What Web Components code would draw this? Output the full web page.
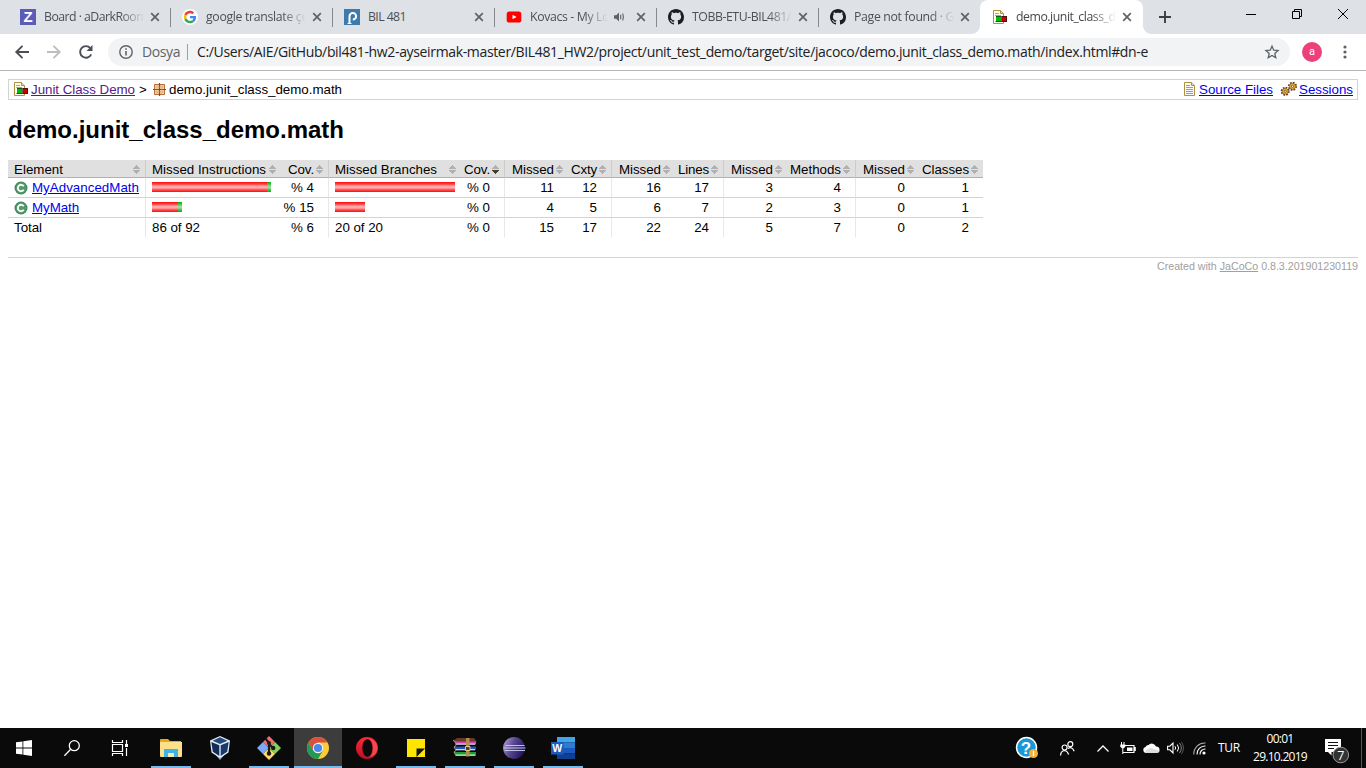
<!DOCTYPE html>
<html lang="tr">
<head>
<meta charset="utf-8">
<title>demo.junit_class_demo.math</title>
<style>
html,body{margin:0;height:100%;overflow:hidden;background:#fff}
</style>
</head>
<body>
<desktop-screen></desktop-screen>
<script>
const UI = '"Open Sans","Noto Sans",sans-serif';
const DOC = '"Liberation Sans",Arial,sans-serif';

function define(name, render) {
  customElements.define(name, class extends HTMLElement {
    constructor() { super(); this.attachShadow({ mode: 'open' }); }
    connectedCallback() { if (!this.shadowRoot.firstChild) this.shadowRoot.innerHTML = render(this); }
  });
}

/* name: [width, height, markup] */
const report = `<path d="M.5.5h7l3 3v10H.5z" fill="#fffdf0" stroke="#b0903c"/><path d="M7.500.5v3h3" fill="#e8dcb0" stroke="#b0903c"/><path d="M2 3.500h4M2 5.500h6M2 11.500h7" stroke="#8ba6d0"/><path d="M3 6h5.500v6H3z" fill="#0a5a1a"/><path d="M3 7h5v4H3z" fill="#0b0"/><path d="M8.500 6H14v6H8.500z" fill="#501010"/><path d="M9 7h4v4H9z" fill="#c00"/>`;
const github = `<path fill="#1b1f23" fill-rule="evenodd" d="M8 0C3.58 0 0 3.58 0 8c0 3.54 2.29 6.53 5.47 7.59.4.07.55-.17.55-.38 0-.19-.01-.82-.01-1.49-2.01.37-2.53-.49-2.69-.94-.09-.23-.48-.94-.82-1.13-.28-.15-.68-.52-.01-.53.63-.01 1.08.58 1.23.82.72 1.21 1.87.87 2.33.66.07-.52.28-.87.51-1.07-1.78-.2-3.64-.89-3.64-3.95 0-.87.31-1.59.82-2.15-.08-.2-.36-1.02.08-2.12 0 0 .67-.21 2.2.82.64-.18 1.32-.27 2-.27.68 0 1.36.09 2 .27 1.53-1.04 2.2-.82 2.2-.82.44 1.1.16 1.92.08 2.12.51.56.82 1.27.82 2.15 0 3.07-1.87 3.75-3.65 3.95.29.25.54.73.54 1.48 0 1.07-.01 1.93-.01 2.2 0 .21.15.46.55.38A8.013 8.013 0 0016 8c0-4.42-3.58-8-8-8z"/>`;
const gear = (x, y) => `<g transform="translate(${x} ${y})"><circle r="3.700" fill="none" stroke="#5c3a10" stroke-width="1.600" stroke-dasharray="1.700 1.200"/><circle r="3" fill="#f0b440" stroke="#7a4c14" stroke-width=".7"/><circle r="1.100" fill="#fff" stroke="#6a4010" stroke-width=".8"/></g>`;
const ICONS = {
  zube: [16,16,`<path fill="#5b5bb8" d="M0 0h16v16H0z"/><text x="8" y="13.300" text-anchor="middle" font-family="Liberation Sans" font-weight="700" font-size="15" fill="#fff">Z</text>`],
  google: [16,16,`<circle cx="8" cy="8" r="8" fill="#fff"/><g transform="translate(1.700 1.700) scale(.2625)"><path fill="#EA4335" d="M24 9.500c3.540 0 6.710 1.220 9.210 3.600l6.850-6.850C35.900 2.380 30.470 0 24 0 14.620 0 6.510 5.380 2.560 13.220l7.980 6.190C12.430 13.720 17.740 9.500 24 9.500z"/><path fill="#4285F4" d="M46.980 24.550c0-1.570-.15-3.090-.38-4.550H24v9.020h12.940c-.58 2.960-2.260 5.480-4.780 7.180l7.730 6c4.510-4.180 7.090-10.360 7.090-17.650z"/><path fill="#FBBC05" d="M10.530 28.590a14.500 14.500 0 010-9.180l-7.980-6.190a24 24 0 000 21.560l7.980-6.190z"/><path fill="#34A853" d="M24 48c6.480 0 11.930-2.130 15.890-5.810l-7.730-6c-2.150 1.450-4.920 2.300-8.160 2.300-6.260 0-11.570-4.220-13.470-9.910l-7.980 6.190C6.510 42.620 14.620 48 24 48z"/></g>`],
  piazza: [16,16,`<path fill="#3e7aab" d="M0 0h16v16H0z"/><path d="M5.500 14V7.200a3.300 3.300 0 1 1 3.300 3.400" fill="none" stroke="#fff" stroke-width="2"/><path d="M3.500 14.500h4" stroke="#fff"/>`],
  youtube: [16,16,`<rect x=".7" y="2.600" width="14.600" height="11" rx="2.600" fill="#f00"/><path fill="#fff" d="M6.500 5.700v4.600l4-2.300z"/>`],
  github: [16,16,github],
  report: [14,14,report],
  close: [10,10,`<path d="M1.200 1.200l7.600 7.600M8.800 1.200L1.200 8.800" stroke="#5f6368" stroke-width="1.700"/>`],
  sound: [11,10,`<path d="M0 3.200h2.200L5 .6v8.800L2.200 6.800H0z" fill="#5f6368"/><path d="M6.700 2.800v4.400M8.700 1.500q1.400 3.500 0 7" fill="none" stroke="#5f6368" stroke-width="1.100"/>`],
  plus: [12,12,`<path d="M6 0v12M0 6h12" stroke="#3c4043" stroke-width="1.900"/>`],
  min: [10,10,`<path d="M0 5.500h10" stroke="#000"/>`],
  restore: [10,10,`<path d="M.5 2.500h7v7h-7zM2.500 2.500v-2h7v7h-2" fill="none" stroke="#000"/>`],
  winclose: [10,10,`<path d="M0 0l10 10M10 0L0 10" stroke="#000"/>`],
  back: [14,14,`<path d="M14 7H1.500M7.500.8L1.300 7l6.200 6.200" fill="none" stroke="#4b4f54" stroke-width="1.900"/>`],
  forward: [14,14,`<path d="M0 7h12.500M6.500.8L12.700 7l-6.200 6.200" fill="none" stroke="#bcbec1" stroke-width="1.900"/>`],
  reload: [16,16,`<path d="M13.200 10.400a5.800 5.800 0 1 1-.9-6.300" fill="none" stroke="#4b4f54" stroke-width="1.900"/><path d="M14.500 1v6h-6z" fill="#4b4f54"/>`],
  info: [14,14,`<circle cx="7" cy="7" r="6.200" fill="none" stroke="#5f6368" stroke-width="1.400"/><path d="M7 6v4.500M7 3.300v1.500" stroke="#5f6368" stroke-width="1.600"/>`],
  star: [14,14,`<path d="M7 1.200l1.750 4 4.300.4-3.250 2.850.97 4.230L7 10.400l-3.770 2.280.97-4.230L.95 5.600l4.300-.4z" fill="none" stroke="#5f6368" stroke-width="1.300"/>`],
  menu: [4,14,`<g fill="#5f6368"><circle cx="2" cy="2" r="1.600"/><circle cx="2" cy="7" r="1.600"/><circle cx="2" cy="12" r="1.600"/></g>`],
  package: [13,13,`<path d="M1.500 1.500h10v10h-10z" fill="#f5d3a4" stroke="#b06a38"/><path d="M6.500 0v13M0 6.500h13" stroke="#8a4a20" stroke-width="1.200"/><path d="M4 1v11M9 1v11M1 4h11M1 9h11" stroke="#d79a62" stroke-width=".5"/>`],
  source: [11,14,`<path d="M.5.5h7l3 3v10H.5z" fill="#f8faff" stroke="#b0903c"/><path d="M7.500.5v3h3" fill="#e8dcb0" stroke="#b0903c"/><path d="M2 3.500h4M2 5.500h7M2 7.500h7M2 9.500h7M2 11.500h7" stroke="#7f9fd0"/>`],
  gears: [16,14,gear(4.200,9.300)+gear(11.500,4.300)],
  klass: [14,14,`<circle cx="7" cy="7" r="6.500" fill="#3c8a58"/><circle cx="7" cy="7" r="5.400" fill="#539a6b"/><path d="M9.700 5.200A3.200 3.200 0 1 0 9.700 8.800" fill="none" stroke="#fff" stroke-width="1.900"/>`],
  windows: [16,16,`<path fill="#fff" d="M0 2.300L6.500 1.400v6.100H0zM7.300 1.300L16 0v7.500H7.300zM0 8.400h6.500v6.200L0 13.700zM7.300 8.400H16V16l-8.700-1.300z"/>`],
  search: [16,16,`<circle cx="10.300" cy="5.700" r="5" fill="none" stroke="#fff" stroke-width="1.300"/><path d="M6.700 9.300L.4 15.700" stroke="#fff" stroke-width="1.300"/>`],
  taskview: [16,16,`<path d="M.5 0v3M.5 2.500h10M10.500 0v3M.5 4.500h10v7H.5zM.5 16v-2.500h10V16M14.500 0v4M14.500 8v8" fill="none" stroke="#fff" stroke-width="1.200"/><path fill="#fff" d="M13 4h3v3h-3z"/>`],
  explorer: [22,18,`<path fill="#e8a818" d="M0 1q0-1 1-1h7l2 2h11v4H0z"/><path fill="#ffe08a" d="M0 3h22v14q0 1-1 1H1q-1 0-1-1z"/><path fill="#3cb4e8" d="M4 10h14v8h-4v-4H8v4H4z"/><path fill="#ffe9a6" d="M8.500 14h5v4h-5z"/>`],
  vbox: [20,24,`<path fill="#8aa8cc" d="M4 17l6 7 6-7z"/><path fill="#e4eef8" d="M10 0l10 4.500-1.500 12L10 22l-8.500-5.500L0 4.500z"/><path fill="#24497c" d="M10 1.300l7.500 3.400-7.500 3.300-7.500-3.300z"/><path fill="#122c58" d="M1.300 6l8 3.300V20l-6.500-4.300z"/><path fill="#1b3a6c" d="M18.700 6l-8 3.300V20l6.500-4.300z"/>`],
  git: [24,24,`<path fill="#f07070" d="M12 0l6 6-6 6-6-6z"/><path fill="#7ca8f8" d="M6 6l6 6-6 6-6-6z"/><path fill="#84d05c" d="M18 6l6 6-6 6-6-6z"/><path fill="#f8dc6c" d="M12 12l6 6-6 6-6-6z"/><path d="M8.500 2.500l3.500 4.500v11M12 8l4 4" fill="none" stroke="#201818" stroke-width="2.200"/><g fill="#201818"><circle cx="12" cy="7" r="2"/><circle cx="12" cy="17.500" r="2.200"/><circle cx="16.200" cy="12" r="2.200"/></g>`],
  chrome: [22,22,`<circle cx="11" cy="11" r="11" fill="#fccb3a"/><path fill="#d9503f" d="M1.470 5.500A11 11 0 0 1 20.530 5.500H11L6.240 13.750z"/><path fill="#239957" d="M1.470 5.500A11 11 0 0 0 11 22l4.760-8.250H6.240z"/><circle cx="11" cy="11" r="5.200" fill="#f4f4f4"/><circle cx="11" cy="11" r="4.100" fill="#4a87ee"/>`],
  opera: [22,22,`<defs><linearGradient id="g" x2="0" y2="1"><stop stop-color="#ff2838"/><stop offset="1" stop-color="#b81022"/></linearGradient></defs><path fill="url(#g)" fill-rule="evenodd" d="M11 0a11 11 0 1 0 0 22 11 11 0 0 0 0-22zM11.500 2.300c3 0 4.900 3.700 4.900 8.700s-1.900 8.700-4.900 8.700-5.100-3.700-5.100-8.700 2.100-8.700 5.100-8.700z"/><path fill="#ff5a60" opacity=".7" d="M13 1.800c6 1 8.500 5 8.500 9.200s-2.500 8.200-8.500 9.200c2.800-1.500 4-5 4-9.200s-1.200-7.700-4-9.200z"/>`],
  sticky: [18,18,`<path fill="#ffe600" d="M0 0h18v18H0z"/><path fill="#141414" d="M9.500 9.500H18L9.500 18z"/>`],
  winrar: [24,20,`<path fill="#6a3a28" d="M0 3L4 0h17l3 4H2z"/><path fill="#c44cae" d="M1 3.500h22v3H3z"/><path fill="#e8d4e4" d="M3 5.500h19v1.200H3z"/><path fill="#2450c8" d="M1 8.500h22v3.200H3z"/><path fill="#d8dce8" d="M3 11h19v1.300H3z"/><path fill="#18a030" d="M1 14h22v4H3z"/><path fill="#d8e8d8" d="M3 16.500h19v1.200H3z"/><path d="M0 2l3 2.500v3L1 9l2 3.500L1 14l2 4" stroke="#a89880" fill="none"/><path fill="#b88a50" d="M13 0h3.500v18.500H13z"/><path d="M12.500 8.500h4.500v4h-4.500z" fill="#504030" stroke="#e8c880"/>`],
  eclipse: [22,22,`<defs><linearGradient id="e" x2="1" y2=".4"><stop stop-color="#b8aade"/><stop offset=".5" stop-color="#5a4a90"/><stop offset="1" stop-color="#241a62"/></linearGradient></defs><circle cx="11" cy="11" r="10.900" fill="url(#e)"/><path d="M2.500 8.500h19M.5 11h22M1.500 13.500h20.500" stroke="#d0d0f4" stroke-width=".9"/>`],
  word: [24,22,`<path fill="#41a5ee" d="M6 0h18v5.500H6z"/><path fill="#2b7cd3" d="M6 5.500h18V11H6z"/><path fill="#185abd" d="M6 11h18v5.500H6z"/><path fill="#103f91" d="M6 16.500h18V22H6z"/><path fill="#1a5dbe" d="M0 5h12.500v12.500H0z"/><text x="6.200" y="15" text-anchor="middle" font-family="Liberation Sans" font-weight="700" font-size="10.500" fill="#fff">W</text>`],
  help: [22,22,`<circle cx="10.500" cy="10.500" r="10" fill="#1898d8" stroke="#fff" stroke-width="1.500"/><text x="10" y="16.500" text-anchor="middle" font-family="Liberation Sans" font-weight="700" font-size="17" fill="#fff">?</text><circle cx="17.500" cy="16.500" r="4.500" fill="#f3b23c"/><path d="M17.500 14v5" stroke="#fff" stroke-width="1.300"/>`],
  people: [15,15,`<g fill="none" stroke="#fff" stroke-width="1.200"><circle cx="4.600" cy="6.500" r="2.500"/><path d="M.6 14.500q0-4.500 4-5 3 .5 4 4"/><circle cx="10.300" cy="3.200" r="2.500"/><path d="M8 7.500q4-2.500 6.200 2.800"/></g>`],
  chevron: [12,7,`<path d="M.5 6.500L6 1l5.500 5.500" fill="none" stroke="#fff" stroke-width="1.300"/>`],
  battery: [16,12,`<path d="M4.500 3.500h9.500v7H3M15.200 5v4" fill="none" stroke="#fff" stroke-width="1.200"/><path fill="#fff" d="M7 5.500h5.500v3.500H7z"/><path d="M1.500 0v3M4 0v3M2.800 5v7" stroke="#fff"/><path d="M.3 2.500h5v2.200l-1.500 1.500h-2L.3 4.700z" fill="#fff"/>`],
  cloud: [17,10,`<path fill="#fff" d="M3 10a3 3 0 0 1-.5-5.900 3.400 3.400 0 0 1 3-2A4.400 4.400 0 0 1 13 3.500 3.300 3.300 0 0 1 14 10z"/><path fill="#d0d0d0" d="M3 10a3 3 0 0 1 0-3l5-2 8.600 3A3 3 0 0 1 14 10z" opacity=".7"/>`],
  volume: [17,12,`<path d="M.6 4.200h2.200L6 1v10L2.800 7.800H.6z" fill="none" stroke="#fff" stroke-width="1.100"/><path d="M8 4.200q1.300 1.800 0 3.600M10.300 2.500q2.600 3.500 0 7" fill="none" stroke="#fff"/><path d="M12.500 1q3.700 5 0 10" fill="none" stroke="#888"/><path d="M14.500 0q4 6 0 12" fill="none" stroke="#555"/>`],
  wifi: [13,13,`<g fill="none" stroke="#fff" stroke-width="1.100"><path d="M.8 12.500A11 11 0 0 1 12.500 1" stroke="#aaa"/><path d="M4 12.500A8 8 0 0 1 12.500 4"/><path d="M7 12.500A5.200 5.200 0 0 1 12.500 7"/></g><circle cx="11" cy="11" r="1.600" fill="#fff"/>`],
  notify: [24,20,`<path fill="#fff" d="M0 1h16v13H6.500v3.500L3 14H0z"/><path d="M3 4.500h10M3 7.500h10M3 10.500h6" stroke="#111"/><circle cx="15.800" cy="17" r="7.800" fill="#333" stroke="#999"/><text x="15.800" y="21.500" text-anchor="middle" font-family="Open Sans" font-size="12.500" fill="#fff">7</text>`]
};
define('ui-icon', el => {
  const [w, h, body] = ICONS[el.getAttribute('name')];
  return `<style>:host{display:block;flex:none;width:${w}px;height:${h}px}svg{display:block;overflow:visible}</style><svg width="${w}" height="${h}" viewBox="0 0 ${w} ${h}">${body}</svg>`;
});

define('browser-tab', el => {
  const on = el.hasAttribute('active');
  const fade = 'linear-gradient(90deg,#000 calc(100% - 24px),transparent)';
  return `<style>
  :host{display:flex;align-items:center;box-sizing:border-box;width:162px;height:34px;padding:0 ${on ? 11 : 10}px 0 12px;font:12.300px/16px ${UI};color:${on ? '#45494d' : '#4c5054'};position:relative;${on ? 'background:#fff;border-radius:8px 8px 0 0' : ''}}
  .ico{width:16px;display:flex;justify-content:center;margin-right:8px}
  .t{flex:1;min-width:0;overflow:hidden;white-space:nowrap;margin-right:6px;${el.hasAttribute('fade') ? `-webkit-mask:${fade};mask:${fade}` : ''}}
  .snd{margin-right:11px}
  .sep{position:absolute;right:-1px;top:8px;width:1px;height:19px;background:#85888c}
  .foot{position:absolute;bottom:0;width:8px;height:8px}
  .foot.l{left:-8px;background:radial-gradient(circle at 0 0,transparent 7.500px,#fff 8px)}
  .foot.r{right:-8px;background:radial-gradient(circle at 100% 0,transparent 7.500px,#fff 8px)}
  </style><span class="ico"><ui-icon name="${el.getAttribute('icon')}"></ui-icon></span>
  <span class="t"><slot></slot></span>${el.hasAttribute('sound') ? '<ui-icon class="snd" name="sound"></ui-icon>' : ''}<ui-icon name="close"></ui-icon>
  ${on ? '<i class="foot l"></i><i class="foot r"></i>' : el.hasAttribute('last') ? '' : '<i class="sep"></i>'}`;
});

define('tab-strip', () => `<style>
  :host{display:flex;height:34px;background:#dee1e6;padding-left:8px;align-items:center}
  browser-tab[active]{width:163px}
  .plus{margin-left:16px}.win{margin:-6px 18px 0 auto;display:flex;gap:36px}
  </style>
  <browser-tab icon="zube" fade><fit-text w="103">Board · aDarkRoom</fit-text></browser-tab>
  <browser-tab icon="google" fade><fit-text w="102">google translate çe</fit-text></browser-tab>
  <browser-tab icon="piazza"><fit-text w="38">BIL 481</fit-text></browser-tab>
  <browser-tab icon="youtube" fade sound><fit-text w="85">Kovacs - My Lov</fit-text></browser-tab>
  <browser-tab icon="github" fade><fit-text w="106">TOBB-ETU-BIL481/b</fit-text></browser-tab>
  <browser-tab icon="github" fade last><fit-text w="103">Page not found · Gi</fit-text></browser-tab>
  <browser-tab icon="report" active fade><fit-text w="106">demo.junit_class_de</fit-text></browser-tab>
  <ui-icon class="plus" name="plus"></ui-icon>
  <div class="win"><ui-icon name="min"></ui-icon><ui-icon name="restore"></ui-icon><ui-icon name="winclose"></ui-icon></div>`);

define('address-bar', () => `<style>
  :host{display:flex;align-items:center;box-sizing:border-box;height:37px;padding:0 19px 1px 15px;border-bottom:1px solid #b6b4b6;background:#fff;font:14px/20px ${UI};color:#202124}
  .nav{display:flex;align-items:center;gap:18px;width:93px}
  .nav ui-icon:last-child{margin-left:-1px}
  .pill{box-sizing:border-box;flex:none;display:flex;align-items:center;width:1182px;height:28px;border-radius:14px;background:#f1f3f4;padding:0 11px}
  .scheme{color:#5f6368;margin-left:9px;width:45px}
  .bar{width:1px;height:16px;background:#9aa0a6;margin-right:9px}
  .star{margin-left:auto}
  .me{width:20px;height:20px;border-radius:50%;background:#ec407a;color:#fff;font:11px/19px Roboto,sans-serif;text-align:center;margin:0 auto 0 12px}
  </style>
  <div class="nav"><ui-icon name="back"></ui-icon><ui-icon name="forward"></ui-icon><ui-icon name="reload"></ui-icon></div>
  <div class="pill"><ui-icon name="info"></ui-icon><span class="scheme"><fit-text w="38">Dosya</fit-text></span><i class="bar"></i>
  <fit-text w="951">C:/Users/AIE/GitHub/bil481-hw2-ayseirmak-master/BIL481_HW2/project/unit_test_demo/target/site/jacoco/demo.junit_class_demo.math/index.html#dn-e</fit-text>
  <ui-icon class="star" name="star"></ui-icon></div><span class="me">a</span><ui-icon name="menu"></ui-icon>`);

define('report-breadcrumb', () => `<style>
  :host{display:flex;align-items:center;box-sizing:border-box;height:21px;border:1px solid #d3d3d3;padding:0 4px 0 5px;font:13.330px/16px ${DOC};color:#000}
  ui-icon{margin-top:-1px}
  a{color:#00e;text-decoration:underline;margin-left:3px}a.v{color:#551a8b}
  .gt{margin:0 6px 0 4px;width:8px}.pkg{margin-left:3px}.right{margin-left:auto;display:flex;align-items:center}
  .g{margin-left:8px}.s{margin-left:2px}.q{margin-left:4px}
  </style><ui-icon name="report"></ui-icon><a class="v" ><fit-text w="104">Junit Class Demo</fit-text></a><span class="gt">&gt;</span><ui-icon name="package"></ui-icon><span class="pkg"><fit-text w="173">demo.junit_class_demo.math</fit-text></span>
  <div class="right"><ui-icon name="source"></ui-icon><a class="q"><fit-text w="74">Source Files</fit-text></a><ui-icon class="g" name="gears"></ui-icon><a class="s"><fit-text w="54">Sessions</fit-text></a></div>`);

define('sort-mark', el => `<style>:host{display:block;width:7px;height:9px}svg{display:block}</style>
  <svg width="7" height="9" shape-rendering="crispEdges"><path fill="#b0b0b0" d="M3 0h1v1h1v1h1v1h1v1H0V3h1V2h1V1h1z"/><path fill="${el.hasAttribute('down') ? '#463c2c' : '#b0b0b0'}" d="M0 5h7v1H6v1H5v1H4v1H3V8H2V7H1V6H0z"/></svg>`);

define('coverage-bar', el => {
  const grad = (a, b, c) => `linear-gradient(${a} 0,${b} 30%,${c} 40%,${c} 60%,${b} 72%,${a} 100%)`;
  return `<style>:host{display:flex;height:10px;margin-top:-1px}i{height:10px}.r{width:${el.getAttribute('missed')}px;background:${grad('#ff0808','#ff6464','#ffaaaa')}}.g{width:${el.getAttribute('covered') || 0}px;background:${grad('#0cac0c','#5cc85c','#96de96')}}</style><i class="r"></i><i class="g"></i>`;
});

const HEAD = [['Element',49],['Missed Instructions',114],['Cov.',26],['Missed Branches',102],['Cov.',26],['Missed',42],['Cxty',26],['Missed',42],['Lines',31],['Missed',42],['Methods',51],['Missed',42],['Classes',47]];
const cls = (n, w) => `<ui-icon name="klass"></ui-icon><a><fit-text w="${w}">${n}</fit-text></a>`;
const ROWS = [
  [cls('MyAdvancedMath',107),'<coverage-bar missed="115" covered="4"></coverage-bar>','% 4','<coverage-bar missed="120"></coverage-bar>','% 0',11,12,16,17,3,4,0,1],
  [cls('MyMath',47),'<coverage-bar missed="26" covered="4"></coverage-bar>','% 15','<coverage-bar missed="30"></coverage-bar>','% 0',4,5,6,7,2,3,0,1],
  ['<fit-text w="28">Total</fit-text>','<fit-text w="48">86 of 92</fit-text>','% 6','<fit-text w="48">20 of 20</fit-text>','% 0',15,17,22,24,5,7,0,2]
];
const ruled = [1, 3, 5, 7, 9, 11];
const kind = i => (ruled.includes(i) ? 'rule ' : '') + (i === 0 || i === 1 || i === 3 ? 'lead' : 'num');
define('coverage-table', () => `<style>
  :host{display:block;width:975px;font:13.330px/17px ${DOC};color:#000}
  .row{display:grid;grid-template-columns:137px 136px 47px 133px 43px 64px 43px 64px 48px 64px 68px 64px 64px;height:20px}
  .row>div{box-sizing:border-box;display:flex;align-items:center;padding:0 14px 0 6px;border-bottom:1px solid #d6d3ce;white-space:nowrap}
  .row>.num{justify-content:flex-end;padding-left:0}
  .row>.rule{border-left:1px solid #e8e8e8}
  .row:last-child>div{border-bottom-color:transparent}
  .row.head{height:18px;background:#e0e0e0;line-height:15px}
  .row.head>div{height:18px;border-bottom-color:#b0b0b0;padding:2px 5px 0 6px}
  .row.head>.num{gap:2px;padding-left:0}
  .row.head>.lead{justify-content:space-between}
  .row.head>.rule{border-left-color:#ccc}
  .body>div:first-child{padding-right:0}
  a{color:#00e;text-decoration:underline;margin-left:4px}
  </style>
  <div class="row head">${HEAD.map(([t, w], i) => `<div class="${kind(i)}"><fit-text w="${w}">${t}</fit-text><sort-mark ${i === 4 ? 'down' : ''}></sort-mark></div>`).join('')}</div>
  ${ROWS.map(r => `<div class="row body">${r.map((c, i) => `<div class="${kind(i)}">${c}</div>`).join('')}</div>`).join('')}`);

define('report-page', () => `<style>
  :host{display:block;flex:1;padding:8px 8px 0;background:#fff}
  h1{margin:0;height:60px;font:bold 24px/60px ${DOC};color:#000}
  footer{margin-top:19px;border-top:1px solid #d6d3ce;padding-top:2px;font:10.670px/13px ${DOC};color:#a0a0a0;text-align:right}
  u{color:#a0a0a0}
  </style><report-breadcrumb></report-breadcrumb><h1><fit-text w="336">demo.junit_class_demo.math</fit-text></h1><coverage-table></coverage-table>
  <footer><fit-text w="201">Created with <u>JaCoCo</u> 0.8.3.201901230119</fit-text></footer>`);

define('task-button', el => `<style>
  :host{display:flex;align-items:center;justify-content:center;box-sizing:border-box;width:${el.getAttribute('w') || 49}px;height:40px;position:relative;${el.hasAttribute('w') ? '' : 'padding-right:2px'}}
  .bg{position:absolute;inset:0 1px 0 0;background:#3c3c3c}
  ui-icon{position:relative}
  .line{position:absolute;bottom:0;height:2px;background:#76b9ed;left:${el.hasAttribute('active') ? '0;right:1px' : '4px;width:40px'}}
  </style>${el.hasAttribute('active') ? '<i class="bg"></i>' : ''}<ui-icon name="${el.getAttribute('icon')}"></ui-icon>${el.hasAttribute('open') ? '<i class="line"></i>' : ''}`);

define('task-bar', () => `<style>
  :host{display:flex;height:40px;background:#0a0a0a;color:#fff;font:12px/18px ${UI}}
  .gap{width:3px}.tray{margin-left:auto;display:flex}
  .txt{display:flex;flex-direction:column;align-items:center;justify-content:center}
  .lang{width:36px}.clock{width:66px}.peek{width:4px;border-left:1px solid #555}
  </style>
  <task-button w="48" icon="windows"></task-button><task-button w="48" icon="search"></task-button><task-button w="48" icon="taskview"></task-button><i class="gap"></i>
  <task-button icon="explorer" open></task-button><task-button icon="vbox"></task-button><task-button icon="git" open></task-button><task-button icon="chrome" open active></task-button><task-button icon="opera"></task-button><task-button icon="sticky" open></task-button><task-button icon="winrar" open></task-button><task-button icon="eclipse" open></task-button><task-button icon="word" open></task-button>
  <div class="tray"><task-button w="38" icon="help"></task-button><task-button w="43" icon="people"></task-button><task-button w="28" icon="chevron"></task-button><task-button w="22" icon="battery"></task-button><task-button w="24" icon="cloud"></task-button><task-button w="24" icon="volume"></task-button><task-button w="24" icon="wifi"></task-button>
  <div class="txt lang"><fit-text w="22">TUR</fit-text></div><div class="txt clock"><fit-text w="27">00:01</fit-text><fit-text w="54">29.10.2019</fit-text></div><task-button w="48" icon="notify"></task-button><i class="peek"></i></div>`);

define('desktop-screen', () => `<style>:host{display:flex;flex-direction:column;width:1366px;height:768px}</style>
  <tab-strip></tab-strip><address-bar></address-bar><report-page></report-page><task-bar></task-bar>`);

/* Text run tracked so that it takes exactly w pixels. */
customElements.define('fit-text', class extends HTMLElement {
  connectedCallback() {
    if (this.shadowRoot) return;
    this.attachShadow({ mode: 'open' }).innerHTML = `<style>:host{display:inline-block;white-space:nowrap;text-decoration:inherit}span{display:inline-block;text-decoration:inherit}</style><span><slot></slot></span>`;
    const span = this.shadowRoot.querySelector('span');
    const width = +this.getAttribute('w');
    const natural = span.getBoundingClientRect().width;
    span.style.letterSpacing = (width - natural) / this.textContent.length + 'px';
  }
});
</script>
</body>
</html>
